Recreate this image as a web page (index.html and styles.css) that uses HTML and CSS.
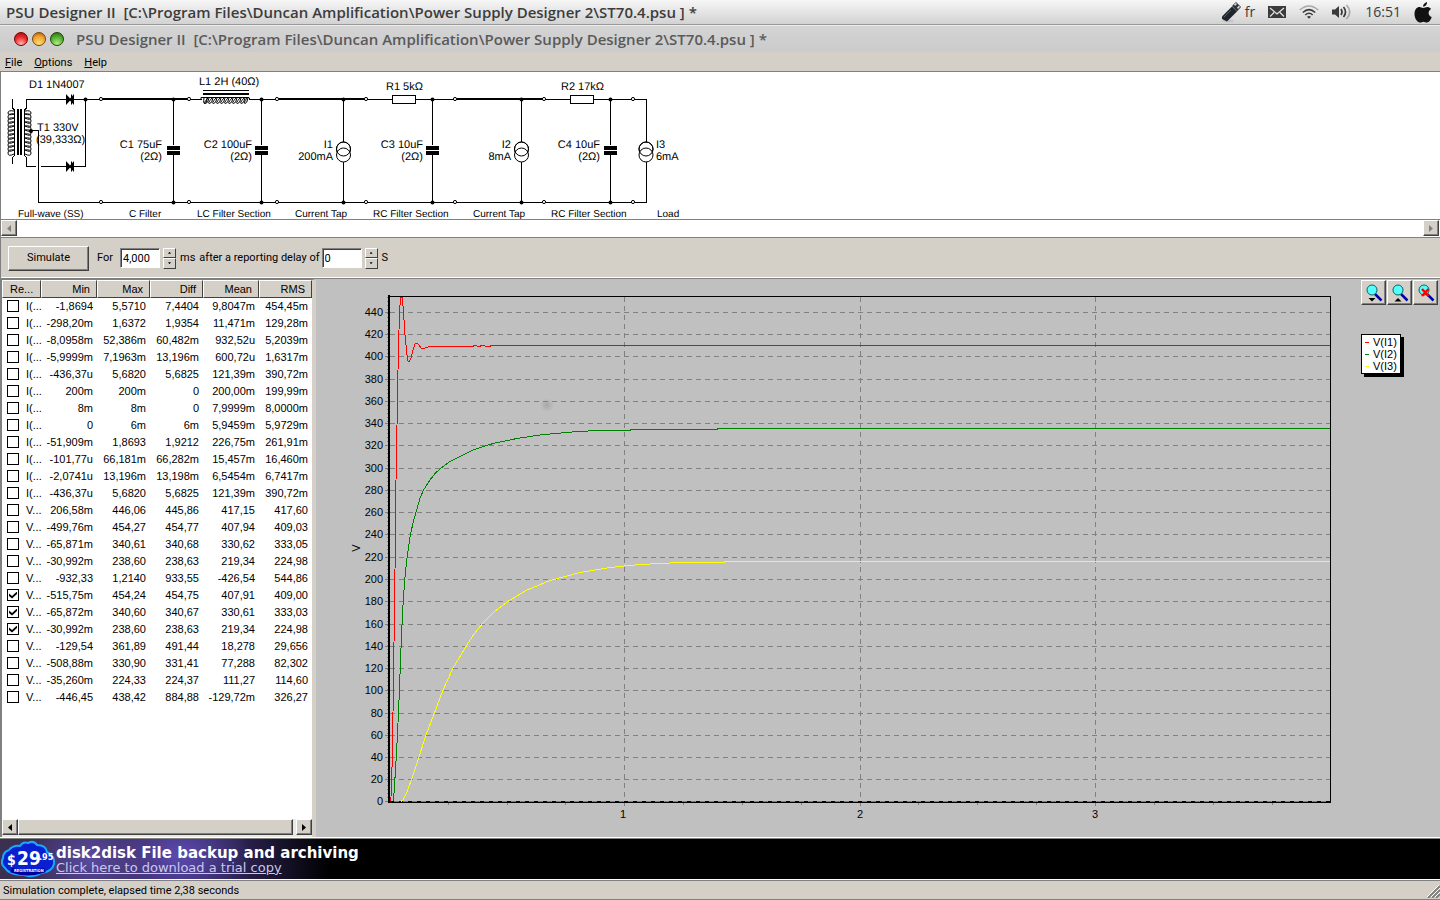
FILE: index.html
```html
<!DOCTYPE html>
<html lang="en">
<head>
<meta charset="utf-8">
<title>PSU Designer II</title>
<link rel="stylesheet" href="styles.css">
</head>
<body>
<header class="panel">
  <div class="panel-title">PSU Designer II&nbsp; [C:\Program Files\Duncan Amplification\Power Supply Designer 2\ST70.4.psu ] *</div>
  <div class="tray">
    <svg class="usb" width="20" height="22" viewBox="0 0 20 22"><ellipse cx="7" cy="20" rx="6" ry="1.500" fill="#c4c4c4"/><path d="M1 15.500 11 5.500 16 10.500 6 20.500 1 18Z" fill="#20242c"/><path d="M11 5 15 1 20 6 16 10.500Z" fill="#2f333b"/><path d="M13 3.500 15 2 16 3 14 5ZM16 6.500 18 4.500 19 6 17 8Z" fill="#d8d8d8"/><path d="M3 16 10 9" stroke="#59606c"/></svg>
    <span class="tray-text lang">fr</span>
    <svg class="mail" width="18" height="12" viewBox="0 0 18 12"><rect width="18" height="12" fill="#3b3b3b"/><path d="M2 2 9 8 16 2M2 10.500 6 6.500M16 10.500 12 6.500" fill="none" stroke="#e6e6e6" stroke-width="1.200"/></svg>
    <svg class="wifi" width="20" height="14" viewBox="0 0 20 14" fill="none" stroke-width="1.600"><path d="M.8 5Q10-3 19.200 5" stroke="#a8a8a8"/><path d="M3.800 7.500Q10 1.800 16.200 7.500M6.300 10Q10 6.500 13.700 10" stroke="#3b3b3b"/><path d="M8 11.800Q10 10 12 11.800L10 13.800Z" fill="#3b3b3b"/></svg>
    <svg class="speaker" width="20" height="16" viewBox="0 0 20 16" fill="none" stroke-width="1.700"><path d="M0 5.500H3L7 2V14L3 10.500H0Z" fill="#3b3b3b"/><path d="M9 5Q11 8 9 11M11.500 3Q15.500 8 11.500 13" stroke="#3b3b3b"/><path d="M14.500 1Q21 8 14.500 15" stroke="#a8a8a8"/></svg>
    <span class="tray-text">16:51</span>
    <svg class="apple" width="18" height="21" viewBox="0 0 18 21" fill="#111"><path d="M9 6C11 6 11.500 5 13.500 5 15 5 16.500 6 17 7 13.500 9 14 14 17.700 15 17 17.500 15 20.500 13 20.500 11.500 20.500 11 19.700 9.500 19.700 8 19.700 7.500 20.500 6 20.500 3 20.500.500 16 .500 12 .500 7.500 3 5 5.500 5 7 5 8 6 9 6Z"/><path d="M9 4.700C9 2.500 10.800.500 13 0 13.200 2.500 11.500 4.700 9 4.700Z"/></svg>
  </div>
</header>
<div class="titlebar">
  <div class="lights">
    <button class="light red" aria-label="Close"></button>
    <button class="light amber" aria-label="Minimize"></button>
    <button class="light green" aria-label="Maximize"></button>
  </div>
  <h1 class="window-title">PSU Designer II&nbsp; [C:\Program Files\Duncan Amplification\Power Supply Designer 2\ST70.4.psu ] *</h1>
</div>
<nav class="menubar">
  <button class="menu"><u>F</u>ile</button>
  <button class="menu"><u>O</u>ptions</button>
  <button class="menu"><u>H</u>elp</button>
</nav>

<section class="schematic">
  <svg class="circuit" width="700" height="147" viewBox="1 72 700 147">
    <defs>
      <g id="open"><circle r="1.600" fill="#fff" stroke="#000"/></g>
      <g id="cap"><path fill="#fff" d="M-7 145H7V155H-7Z"/><path d="M-6.500 146H6.500V150H-6.500ZM-6.500 151H6.500V155H-6.500Z"/></g>
      <g id="source" fill="none" stroke="#000"><circle cy="149" r="7" fill="#fff"/><circle cy="155" r="7" fill="#fff"/><circle cy="149" r="7"/></g>
      <g id="diode"><path d="M-4-5.500 1 0-4 5.500ZM1-5H2V5H1ZM4-5.500V5.500L0 1V-1Z"/></g>
    </defs>
    <g fill="none" stroke="#000" shape-rendering="crispEdges">
      <path d="M26.500 108V99.500H101M85.500 99.500V166.500H41M36 166.500H26.500V157M31 130.500H38.500V202.500H646.500V99.500H101M12.500 99V108L14.500 110V155L12.500 158V164M26.500 108 24.500 110V155L26.500 158M173.500 99V202M261.500 99V202M343.500 99V202M432.500 99V202M521.500 99V202M610.500 99V202"/>
      <path stroke-width="2" d="M103 99H188M279 99H365M457 99H543M18 109V155M21 109V155M203 94H249"/>
      <path d="M203 90.500H249"/>
      <path fill="#fff" d="M392.500 95.500H415.500V103.500H392.500ZM570.500 95.500H593.500V103.500H570.500Z"/>
    </g>
    <path d="M202 98H249V102H202Z" fill="#fff"/>
    <g fill="none" stroke="#000">
      <path d="M201 99.500V97.500H249L250 99.500M204 98q-1 6 1 5.500t2-5.500M208 98q-5 5.500-2.500 5.500t3.500-5.500M212 98q-5 5.500-2.500 5.500t3.500-5.500M216 98q-5 5.500-2.500 5.500t3.500-5.500M220 98q-5 5.500-2.500 5.500t3.500-5.500M224 98q-5 5.500-2.500 5.500t3.500-5.500M228 98q-5 5.500-2.500 5.500t3.500-5.500M232 98q-5 5.500-2.500 5.500t3.500-5.500M236 98q-5 5.500-2.500 5.500t3.500-5.500M240 98q-5 5.500-2.500 5.500t3.500-5.500M244 98q-5 5.500-2.500 5.500t3.500-5.500M247 98q-4 5.500-2 5.500t3-5.500"/>
      <path d="M14 111q-6-1-6 2t6 1q-6-1-6 3t6 1q-6-1-6 3t6 1q-6-1-6 3t6 1q-6-1-6 3t6 1q-6-1-6 3t6 1q-6-1-6 3t6 1q-6-1-6 3t6 1q-6-1-6 3t6 1q-6-1-6 3t6 1q-6-1-6 3t6 1"/>
      <path d="M25 111q6-1 6 2t-6 1q6-1 6 3t-6 1q6-1 6 3t-6 1q6-1 6 3t-6 1q6-1 6 3t-6 1q6-1 6 3t-6 1q6-1 6 3t-6 1q6-1 6 3t-6 1q6-1 6 3t-6 1q6-1 6 3t-6 1q6-1 6 3t-6 1"/>
    </g>
    <use href="#diode" x="70" y="99.500"/><use href="#diode" x="70" y="166.500"/>
    <use href="#cap" x="173.500"/><use href="#cap" x="261.500"/><use href="#cap" x="432.500"/><use href="#cap" x="610.500"/>
    <use href="#source" x="343.500"/><use href="#source" x="521.500"/><use href="#source" x="646"/>
    <use href="#open" x="101" y="99"/><use href="#open" x="189" y="99"/><use href="#open" x="277" y="99"/><use href="#open" x="366" y="99"/><use href="#open" x="455" y="99"/><use href="#open" x="544" y="99"/><use href="#open" x="633" y="99"/>
    <use href="#open" x="101" y="202"/><use href="#open" x="189" y="202"/><use href="#open" x="277" y="202"/><use href="#open" x="366" y="202"/><use href="#open" x="455" y="202"/><use href="#open" x="544" y="202"/><use href="#open" x="633" y="202"/>
    <g>
      <circle cx="85.500" cy="99.500" r="2"/><circle cx="31" cy="131" r="2"/><circle cx="173.500" cy="99.500" r="2"/><circle cx="261.500" cy="99.500" r="2"/><circle cx="343.500" cy="99.500" r="2"/><circle cx="432.500" cy="99.500" r="2"/><circle cx="521.500" cy="99.500" r="2"/><circle cx="610.500" cy="99.500" r="2"/>
      <circle cx="173.500" cy="202.500" r="2"/><circle cx="261.500" cy="202.500" r="2"/><circle cx="343.500" cy="202.500" r="2"/><circle cx="432.500" cy="202.500" r="2"/><circle cx="521.500" cy="202.500" r="2"/><circle cx="610.500" cy="202.500" r="2"/>
    </g>
    <g class="part">
      <text x="29" y="88">D1 1N4007</text><text x="199" y="85">L1 2H (40Ω)</text><text x="37" y="131">T1 330V</text><text x="36" y="143">(39,333Ω)</text>
      <text x="386" y="90">R1 5kΩ</text><text x="561" y="90">R2 17kΩ</text><text x="656" y="148">I3</text><text x="656" y="160">6mA</text>
    </g>
    <g class="part" text-anchor="end">
      <text x="162" y="148">C1 75uF</text><text x="162" y="160">(2Ω)</text><text x="252" y="148">C2 100uF</text><text x="252" y="160">(2Ω)</text>
      <text x="333" y="148">I1</text><text x="333" y="160">200mA</text><text x="423" y="148">C3 10uF</text><text x="423" y="160">(2Ω)</text>
      <text x="511" y="148">I2</text><text x="511" y="160">8mA</text><text x="600" y="148">C4 10uF</text><text x="600" y="160">(2Ω)</text>
    </g>
    <g class="stage">
      <text x="18" y="217">Full-wave (SS)</text><text x="129" y="217">C Filter</text><text x="197" y="217">LC Filter Section</text><text x="295" y="217">Current Tap</text><text x="373" y="217">RC Filter Section</text><text x="473" y="217">Current Tap</text><text x="551" y="217">RC Filter Section</text><text x="657" y="217">Load</text>
    </g>
  </svg>
</section>
<div class="circuit-scroll">
  <button class="scroll-btn" aria-label="Scroll left"><svg width="4" height="7" viewBox="0 0 4 7"><path d="M4 0V7L0 3.500Z" fill="#808080"/></svg></button>
  <button class="scroll-btn" aria-label="Scroll right"><svg width="4" height="7" viewBox="0 0 4 7"><path d="M0 0V7L4 3.500Z" fill="#808080"/></svg></button>
</div>

<form class="controls">
  <button type="button" class="simulate">Simulate</button>
  <label class="for-label" for="duration">For</label>
  <input id="duration" class="field" type="text" value="4,000">
  <span class="spin"><button type="button" aria-label="More time"><i class="up"></i></button><button type="button" aria-label="Less time"><i class="down"></i></button></span>
  <span class="unit">ms</span>
  <label class="delay-label" for="delay">after a reporting delay of</label>
  <input id="delay" class="field" type="text" value="0">
  <span class="spin"><button type="button" aria-label="More delay"><i class="up"></i></button><button type="button" aria-label="Less delay"><i class="down"></i></button></span>
  <span class="unit">S</span>
</form>

<main class="workspace">
  <section class="results">
    <table class="grid">
      <colgroup><col class="c-name"><col class="c-min"><col class="c-max"><col class="c-diff"><col class="c-mean"><col class="c-rms"></colgroup>
      <thead><tr><th>Re...</th><th>Min</th><th>Max</th><th>Diff</th><th>Mean</th><th>RMS</th></tr></thead>
      <tbody>
        <tr><td><label><input type="checkbox">I(...</label></td><td>-1,8694</td><td>5,5710</td><td>7,4404</td><td>9,8047m</td><td>454,45m</td></tr>
        <tr><td><label><input type="checkbox">I(...</label></td><td>-298,20m</td><td>1,6372</td><td>1,9354</td><td>11,471m</td><td>129,28m</td></tr>
        <tr><td><label><input type="checkbox">I(...</label></td><td>-8,0958m</td><td>52,386m</td><td>60,482m</td><td>932,52u</td><td>5,2039m</td></tr>
        <tr><td><label><input type="checkbox">I(...</label></td><td>-5,9999m</td><td>7,1963m</td><td>13,196m</td><td>600,72u</td><td>1,6317m</td></tr>
        <tr><td><label><input type="checkbox">I(...</label></td><td>-436,37u</td><td>5,6820</td><td>5,6825</td><td>121,39m</td><td>390,72m</td></tr>
        <tr><td><label><input type="checkbox">I(...</label></td><td>200m</td><td>200m</td><td>0</td><td>200,00m</td><td>199,99m</td></tr>
        <tr><td><label><input type="checkbox">I(...</label></td><td>8m</td><td>8m</td><td>0</td><td>7,9999m</td><td>8,0000m</td></tr>
        <tr><td><label><input type="checkbox">I(...</label></td><td>0</td><td>6m</td><td>6m</td><td>5,9459m</td><td>5,9729m</td></tr>
        <tr><td><label><input type="checkbox">I(...</label></td><td>-51,909m</td><td>1,8693</td><td>1,9212</td><td>226,75m</td><td>261,91m</td></tr>
        <tr><td><label><input type="checkbox">I(...</label></td><td>-101,77u</td><td>66,181m</td><td>66,282m</td><td>15,457m</td><td>16,460m</td></tr>
        <tr><td><label><input type="checkbox">I(...</label></td><td>-2,0741u</td><td>13,196m</td><td>13,198m</td><td>6,5454m</td><td>6,7417m</td></tr>
        <tr><td><label><input type="checkbox">I(...</label></td><td>-436,37u</td><td>5,6820</td><td>5,6825</td><td>121,39m</td><td>390,72m</td></tr>
        <tr><td><label><input type="checkbox">V...</label></td><td>206,58m</td><td>446,06</td><td>445,86</td><td>417,15</td><td>417,60</td></tr>
        <tr><td><label><input type="checkbox">V...</label></td><td>-499,76m</td><td>454,27</td><td>454,77</td><td>407,94</td><td>409,03</td></tr>
        <tr><td><label><input type="checkbox">V...</label></td><td>-65,871m</td><td>340,61</td><td>340,68</td><td>330,62</td><td>333,05</td></tr>
        <tr><td><label><input type="checkbox">V...</label></td><td>-30,992m</td><td>238,60</td><td>238,63</td><td>219,34</td><td>224,98</td></tr>
        <tr><td><label><input type="checkbox">V...</label></td><td>-932,33</td><td>1,2140</td><td>933,55</td><td>-426,54</td><td>544,86</td></tr>
        <tr><td><label><input type="checkbox" checked>V...</label></td><td>-515,75m</td><td>454,24</td><td>454,75</td><td>407,91</td><td>409,00</td></tr>
        <tr><td><label><input type="checkbox" checked>V...</label></td><td>-65,872m</td><td>340,60</td><td>340,67</td><td>330,61</td><td>333,03</td></tr>
        <tr><td><label><input type="checkbox" checked>V...</label></td><td>-30,992m</td><td>238,60</td><td>238,63</td><td>219,34</td><td>224,98</td></tr>
        <tr><td><label><input type="checkbox">V...</label></td><td>-129,54</td><td>361,89</td><td>491,44</td><td>18,278</td><td>29,656</td></tr>
        <tr><td><label><input type="checkbox">V...</label></td><td>-508,88m</td><td>330,90</td><td>331,41</td><td>77,288</td><td>82,302</td></tr>
        <tr><td><label><input type="checkbox">V...</label></td><td>-35,260m</td><td>224,33</td><td>224,37</td><td>111,27</td><td>114,60</td></tr>
        <tr><td><label><input type="checkbox">V...</label></td><td>-446,45</td><td>438,42</td><td>884,88</td><td>-129,72m</td><td>326,27</td></tr>
      </tbody>
    </table>
    <div class="table-scroll">
      <button class="scroll-btn" aria-label="Scroll table left"><svg width="4" height="7" viewBox="0 0 4 7"><path d="M4 0V7L0 3.500Z"/></svg></button>
      <div class="thumb"></div>
      <button class="scroll-btn" aria-label="Scroll table right"><svg width="4" height="7" viewBox="0 0 4 7"><path d="M0 0V7L4 3.500Z"/></svg></button>
    </div>
  </section>
  <section class="chart">
    <svg class="plot" viewBox="316 279 1040 557" preserveAspectRatio="xMidYMin meet">
      <defs><radialGradient id="smudge"><stop offset="0" stop-color="#a8a8a8"/><stop offset="1" stop-color="#c0c0c0"/></radialGradient></defs>
      <circle cx="547" cy="405" r="7" fill="url(#smudge)"/>
      <g fill="none" shape-rendering="crispEdges">
        <path stroke="#808080" stroke-dasharray="5 4" d="M390 779.500H1330M390 757.500H1330M390 735.500H1330M390 713.500H1330M390 690.500H1330M390 668.500H1330M390 646.500H1330M390 624.500H1330M390 601.500H1330M390 579.500H1330M390 557.500H1330M390 534.500H1330M390 512.500H1330M390 490.500H1330M390 468.500H1330M390 445.500H1330M390 423.500H1330M390 401.500H1330M390 379.500H1330M390 356.500H1330M390 334.500H1330M390 312.500H1330M624.500 297V801M860.500 297V801M1095.500 297V801"/>
        <path stroke="#808080" d="M385 801.500H390M385 779.500H390M385 757.500H390M385 735.500H390M385 713.500H390M385 690.500H390M385 668.500H390M385 646.500H390M385 624.500H390M385 601.500H390M385 579.500H390M385 557.500H390M385 534.500H390M385 512.500H390M385 490.500H390M385 468.500H390M385 445.500H390M385 423.500H390M385 401.500H390M385 379.500H390M385 356.500H390M385 334.500H390M385 312.500H390M624.500 802V806M860.500 802V806M1095.500 802V806M448.500 802V805M507.500 802V805M565.500 802V805M683.500 802V805M742.500 802V805M801.500 802V805M918.500 802V805M977.500 802V805M1036.500 802V805M1154.500 802V805M1213.500 802V805M1272.500 802V805"/>
        <path stroke="#808080" stroke-dasharray="1 3" d="M387.500 297V801"/>
        <path stroke="#000" d="M388 296.500H1330.500V802"/>
        <path stroke="#000" stroke-width="2" d="M389 295V802H1331"/>
        <path stroke="#808080" stroke-dasharray="5 4" d="M394 801.500H1330"/>
      </g>
      <g fill="none" stroke-linejoin="round" shape-rendering="crispEdges">
        <path stroke="#ff0" d="M401 801.500 403 800 407 792 412 778 418 760 426 735 435 711.500 443 690 453 668 466 646.500 474 634 483 623 494 612 507 602 526 590.500 550 580.500 580 572.500 607 568 624 566 640 564.500 680 562.500H724V561.500H1330"/>
        <path stroke="#008000" d="M393 801 394 793 395.300 773 396.700 750 398 723 399.300 693 400.300 667 401.300 640 402.700 610 404.700 580 406.700 560 410 537 413.300 521.500 416.700 510 420 498 423.500 490 430 480 435 473.500 441 468 450 461.500 461 456 473 450 493 443.500 517 438.500 540 435 577 431.500 600 430.500H630V429.500H717V428.500H1330"/>
        <path stroke="#f00" d="M390 801 391 797 392 768 393 713 394 643 395 570 396 480 397 425 398 370 399 330 400 305 401 297H402L403 306 404 320 405 335 406 345 407 355 408 361 409 362 411 358 413 350 415 344 417 343 419 345 421 348 424 348.500 429 346.500H473V345.500H477V346.500H480V345.500H485V346.500H490V345.500H1330"/>
      </g>
      <g class="axis" text-anchor="end">
        <text x="383" y="316">440</text><text x="383" y="338">420</text><text x="383" y="360">400</text><text x="383" y="383">380</text><text x="383" y="405">360</text><text x="383" y="427">340</text><text x="383" y="449">320</text><text x="383" y="472">300</text><text x="383" y="494">280</text><text x="383" y="516">260</text><text x="383" y="538">240</text><text x="383" y="561">220</text><text x="383" y="583">200</text><text x="383" y="605">180</text><text x="383" y="628">160</text><text x="383" y="650">140</text><text x="383" y="672">120</text><text x="383" y="694">100</text><text x="383" y="717">80</text><text x="383" y="739">60</text><text x="383" y="761">40</text><text x="383" y="783">20</text><text x="383" y="805">0</text>
      </g>
      <g class="axis" text-anchor="middle"><text x="623" y="818">1</text><text x="860" y="818">2</text><text x="1095" y="818">3</text><text transform="translate(360 548) rotate(-90)">V</text></g>
    </svg>
    <aside class="side">
      <div class="zoom-tools">
        <button class="tool" aria-label="Zoom in"><svg width="20" height="20" viewBox="0 0 20 20"><path d="M11 11 17.500 17.500" stroke="#00a" stroke-width="2.500"/><circle cx="8" cy="7" r="5" fill="#5ff" stroke="#066"/><path d="M4.500 15H11.500L8 18.500Z"/></svg></button>
        <button class="tool" aria-label="Zoom out"><svg width="20" height="20" viewBox="0 0 20 20"><path d="M11 11 17.500 17.500" stroke="#00a" stroke-width="2.500"/><circle cx="8" cy="7" r="5" fill="#5ff" stroke="#066"/><path d="M4.500 18.500H11.500L8 15Z"/></svg></button>
        <button class="tool" aria-label="Reset zoom"><svg width="20" height="20" viewBox="0 0 20 20"><path d="M11 11 17.500 17.500" stroke="#00a" stroke-width="2.500"/><circle cx="8" cy="7" r="5" fill="#5ff" stroke="#066"/><path d="M6 6 12.500 13M12.500 6 6 13" stroke="#f00" stroke-width="2.500"/></svg></button>
      </div>
      <ul class="legend">
        <li class="k1">V(I1)</li><li class="k2">V(I2)</li><li class="k3">V(I3)</li>
      </ul>
    </aside>
  </section>
</main>

<section class="banner">
  <svg width="54" height="38" viewBox="0 0 54 38">
    <path d="M8 10Q12 5 19 6 22 1 27 3 33 0 36 5 45 5 46 12 54 16 53 24 51 32 40 33 33 38 23 35 8 35 4 28-1 24 2 18 2 12 8 10Z" fill="#0a1fd0" stroke="#19a7ff" stroke-width="2"/>
    <path d="M10 30Q26 36 44 30" fill="none" stroke="#0000a0" stroke-width="5"/>
    <g fill="#fff" class="price"><text x="6" y="25" font-size="14">$</text><text x="16" y="25" font-size="19">29</text><text x="38" y="20" font-size="9">.95</text><text x="13" y="32" font-size="4">REGISTRATION</text></g>
  </svg>
  <div class="ad"><strong>disk2disk File backup and archiving</strong><a href="#">Click here to download a trial copy</a></div>
</section>
<footer class="status"><span>Simulation complete, elapsed time 2,38 seconds</span>
  <svg width="13" height="13" viewBox="0 0 13 13"><path d="M1 13 13 1M5 13 13 5M9 13 13 9" stroke="#808080" stroke-width="2"/><path d="M0 12 12 0M4 12 13 3M8 12 13 7" stroke="#fff"/></svg>
</footer>
</body>
</html>
```

FILE: styles.css
```css
* { box-sizing: border-box; }
body {
  margin: 0;
  min-height: 100vh;
  display: flex;
  flex-direction: column;
  background: #d4d0c8;
  color: #000;
  font: 11px/14px Roboto, "Liberation Sans", sans-serif;
}
button { font: inherit; color: inherit; padding: 0; margin: 0; border: 0; background: none; }
svg { display: block; flex: none; }

.panel {
  height: 25px;
  display: flex;
  align-items: center;
  justify-content: space-between;
  padding: 0 8px 0 6px;
  background: linear-gradient(#f6f6f6, #d2d2d2);
  border-bottom: 1px solid #999;
}
.panel-title, .window-title {
  margin: 0;
  font: 600 15px/20px "Open Sans", sans-serif;
  color: #3c3c3c;
  white-space: nowrap;
}
.tray { display: flex; align-items: center; gap: 13px; }
.tray-text { font: 14px/20px "Open Sans", sans-serif; color: #3c3c3c; }
.lang { margin-left: -9px; }

.titlebar {
  height: 27px;
  display: flex;
  align-items: center;
  gap: 12px;
  padding-left: 14px;
  background: linear-gradient(#d4d4d4, #cbcbcb);
  border-top: 1px solid #eee;
}
.window-title { color: #5a5a5a; }
.lights { display: flex; gap: 4px; }
.light { width: 14px; height: 14px; border-radius: 50%; border: 1px solid #444; }
.red { background: radial-gradient(circle at 50% 90%, #fbb, #e33 50%, #a00); border-color: #700; }
.amber { background: radial-gradient(circle at 50% 90%, #ffe070, #f0a030 60%, #a50); border-color: #741; }
.green { background: radial-gradient(circle at 50% 90%, #b0f080, #50a830 60%, #260); border-color: #240; }

.menubar { height: 19px; display: flex; gap: 12px; padding: 3px 0 0 5px; align-items: center; }

.schematic { height: 149px; border: 1px solid #808080; border-right: 0; background: #fff; }
.circuit { text-rendering: geometricPrecision; overflow: visible; }
.part { font: 11px "Liberation Sans", sans-serif; }
.stage { font: 10px "Liberation Sans", sans-serif; }
.circuit-scroll { height: 18px; display: flex; justify-content: space-between; padding-right: 1px; background: #fff; border-bottom: 1px solid #808080; border-left: 1px solid #808080; }
.scroll-btn {
  width: 16px;
  height: 16px;
  display: grid;
  place-items: center;
  background: #d4d0c8;
  border: 1px solid;
  border-color: #fff #404040 #404040 #fff;
  box-shadow: inset -1px -1px #808080;
}

.controls {
  height: 41px;
  display: flex;
  align-items: center;
  padding-left: 7px;
  border-left: 1px solid #808080;
  border-bottom: 1px solid #808080;
  box-shadow: inset 0 -1px #fff;
}
.simulate {
  width: 81px;
  height: 25px;
  margin-right: 8px;
  border: 1px solid;
  border-color: #fff #404040 #404040 #fff;
  box-shadow: inset -1px -1px #808080;
}
.for-label { width: 16px; }
.field {
  width: 40px;
  height: 20px;
  margin-left: 7px;
  padding: 0 2px;
  border: 1px solid;
  border-color: #808080 #fff #fff #808080;
  box-shadow: inset 1px 1px #404040;
  font: inherit;
}
.spin { display: flex; flex-direction: column; width: 13px; height: 21px; margin: 0 4px 0 3px; }
.spin button { flex: 1; display: grid; place-items: center; border: 1px solid; border-color: #fff #404040 #404040 #fff; }
.up, .down { width: 3px; height: 2px; background: #000; }
.up { clip-path: polygon(50% 0, 100% 100%, 0 100%); }
.down { clip-path: polygon(0 0, 100% 0, 50% 100%); }
.delay-label { margin-left: 4px; }
.delay-label + .field { margin-left: 2px; }

.workspace { flex: 1; display: flex; min-height: 558px; border-bottom: 1px solid #fff; }
.results { width: 316px; flex: none; display: flex; flex-direction: column; background: #fff; border: solid #808080; border-width: 1px 0 0 2px; border-right: 4px solid #d4d0c8; }
.grid { width: 310px; border-collapse: separate; border-spacing: 0; table-layout: fixed; font: 11px/14px "Liberation Sans", sans-serif; }
.c-name { width: 39px; }
.c-min { width: 56px; }
.c-max { width: 53px; }
.c-diff { width: 53px; }
.c-mean { width: 56px; }
.c-rms { width: 53px; }
.grid th {
  height: 18px;
  padding: 0 6px 0 7px;
  text-align: right;
  font-weight: normal;
  background: #d4d0c8;
  border: 1px solid;
  border-color: #fff #404040 #404040 #fff;
}
.grid th:first-child { text-align: left; }
.grid td { height: 17px; padding: 0 4px 0 0; text-align: right; line-height: 17px; white-space: nowrap; }
.grid td:first-child { padding: 0 0 0 5px; text-align: left; }
.grid label { display: flex; align-items: center; gap: 7px; }
.grid input { appearance: none; flex: none; width: 12px; height: 12px; margin: 0 0 1px; border: 1px solid #000; display: grid; place-items: center; }
.grid input:checked::before { content: ""; width: 8px; height: 7px; background: #000; clip-path: polygon(0 30%, 38% 65%, 100% 0, 100% 35%, 38% 100%, 0 65%); }
.table-scroll { margin-top: auto; display: flex; padding-bottom: 2px; background: #eae8e4; }
.thumb { flex: 1; margin: 0 3px 0 0; background: #d4d0c8; border: 1px solid; border-color: #fff #404040 #404040 #fff; box-shadow: inset -1px -1px #808080; }

.chart { flex: 1; min-width: 0; display: flex; background: #c0c0c0; }
.plot { flex: 1; min-width: 0; height: auto; }
.axis { font: 11px "Liberation Sans", sans-serif; }
.side { width: 84px; padding: 1px 0 0 5px; }
.zoom-tools { display: flex; gap: 1px; }
.tool { width: 25px; height: 25px; display: grid; place-items: center; background: #d4d0c8; border: 1px solid; border-color: #fff #404040 #404040 #fff; box-shadow: inset -1px -1px #808080; }
.legend { width: 40px; margin: 29px 0 0; padding: 1px 3px; list-style: none; background: #fff; border: 1px solid #000; box-shadow: 3px 3px #000; font: 11px/12px "Liberation Sans", sans-serif; }
.legend li { display: flex; align-items: center; gap: 4px; }
.legend li::before { content: ""; width: 4px; height: 1px; flex: none; background: currentColor; }
.k1::before { color: #f00; }
.k2::before { color: #008000; }
.k3::before { color: #ff0; }

.banner {
  height: 42px;
  display: flex;
  align-items: center;
  gap: 1px;
  padding-left: 1px;
  border-top: 1px solid #808080;
  border-bottom: 1px solid #fff;
  background:
    radial-gradient(ellipse 60px 50px at 90px 50%, #5a4aa0, transparent),
    radial-gradient(ellipse 70px 50px at 180px 40%, #5c4ab0, transparent),
    linear-gradient(90deg, #3b3050, #3a2c66 160px, #2b2250 240px, #000 330px);
  background-color: #000;
}
.ad { display: flex; flex-direction: column; padding-top: 2px; font-family: "DejaVu Sans", sans-serif; color: #fff; }
.ad strong { font-size: 15px; line-height: 15px; }
.ad a { font-size: 13px; line-height: 14px; color: #c8c8f0; }
.price { font-family: "DejaVu Sans Condensed", sans-serif; font-weight: bold; }

.status { height: 20px; display: flex; align-items: center; justify-content: space-between; padding: 2px 0 0 3px; border: solid #808080; border-width: 1px 0; }
```
